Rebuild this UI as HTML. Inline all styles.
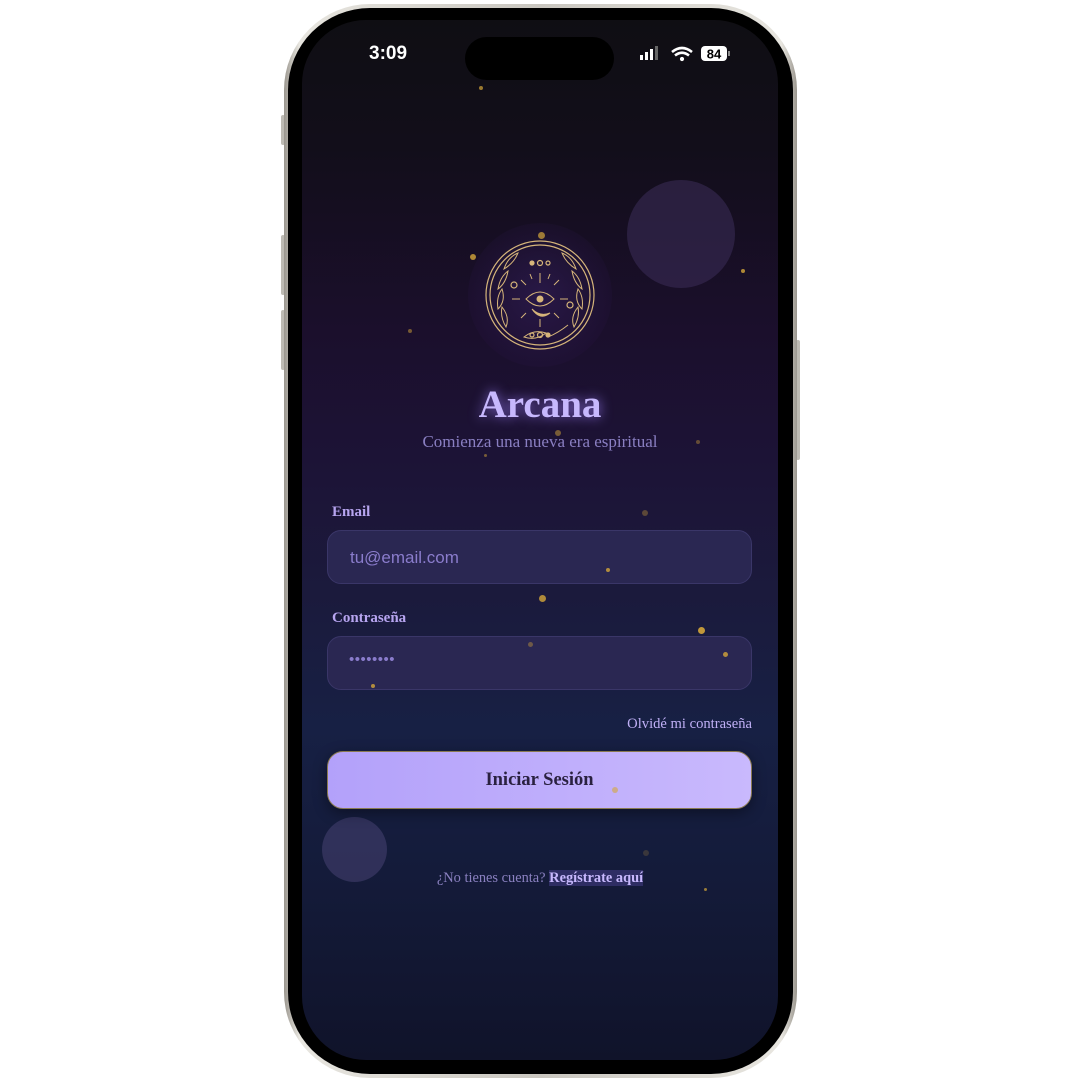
<!DOCTYPE html>
<html><head><meta charset="utf-8"><style>
*{margin:0;padding:0;box-sizing:border-box}
body{width:1080px;height:1080px;background:#fff;position:relative;overflow:hidden;font-family:"Liberation Serif",serif}
.frame{position:absolute;left:284px;top:4px;width:513px;height:1074px;border-radius:86px;background:linear-gradient(90deg,#9a968e,#e8e6e0 3%,#c9c6bf 50%,#e8e6e0 97%,#9a968e);}
.bezel{position:absolute;left:288px;top:8px;width:505px;height:1066px;border-radius:82px;background:#000}
.screen{position:absolute;left:302px;top:20px;width:476px;height:1040px;border-radius:64px;overflow:hidden;
background:linear-gradient(180deg,#0f0e13 0%,#120e1a 12%,#1b0f2c 30%,#1c1336 42%,#1b1a3c 55%,#172044 68%,#141b3a 82%,#10132a 100%)}
.btn-side{position:absolute;background:#bdbab3;border-radius:2px}
.abs{position:absolute}
.dot{position:absolute;border-radius:50%;background:#d4a63a}
.input{position:absolute;left:25px;width:425px;height:54px;border-radius:14px;background:#2a2752;border:1px solid #3a3668}
.label{position:absolute;left:30px;font-weight:bold;font-size:15px;color:#b7a5f0}
</style></head><body>
<div class="btn-side" style="left:281px;top:115px;width:4px;height:30px"></div>
<div class="btn-side" style="left:281px;top:235px;width:4px;height:60px"></div>
<div class="btn-side" style="left:281px;top:310px;width:4px;height:60px"></div>
<div class="btn-side" style="left:796px;top:340px;width:4px;height:120px"></div>
<div class="frame"></div>
<div class="bezel"></div>
<div class="screen">
  <div class="abs" style="left:67px;top:23px;font-family:'Liberation Sans',sans-serif;font-weight:bold;font-size:19px;color:#fff">3:09</div>
  <div class="abs" style="left:163px;top:17px;width:149px;height:43px;border-radius:22px;background:#000"></div>
  <svg class="abs" style="left:336px;top:24px" width="100" height="20" viewBox="0 0 100 20">
    <rect x="2" y="11" width="3" height="5" fill="#fff"/><rect x="7" y="8" width="3" height="8" fill="#fff"/><rect x="12" y="5" width="3" height="11" fill="#fff"/><rect x="17" y="2" width="3" height="14" fill="#666"/>
    <path d="M34 8 Q44 0 54 8" stroke="#fff" stroke-width="2.6" fill="none"/><path d="M37 11.5 Q44 6 51 11.5" stroke="#fff" stroke-width="2.6" fill="none"/><circle cx="44" cy="15" r="2.1" fill="#fff"/>
    <rect x="63" y="2" width="26" height="15" rx="4" fill="#fff"/><rect x="90" y="7" width="2" height="5" fill="#888"/>
    <text x="76" y="14.5" text-anchor="middle" font-family="Liberation Sans" font-weight="bold" font-size="13" fill="#000">84</text>
  </svg>
  <div class="abs" style="left:325px;top:160px;width:108px;height:108px;border-radius:50%;background:rgba(60,45,90,.55)"></div>
  <div class="abs" style="left:20px;top:797px;width:65px;height:65px;border-radius:50%;background:rgba(75,70,120,.5)"></div>
  <div class="abs" style="left:166px;top:203px;width:144px;height:144px;border-radius:50%;background:radial-gradient(circle,rgba(50,30,90,.6),rgba(40,20,70,.2) 70%,transparent)"></div>
  <svg class="abs" style="left:182px;top:219px" width="112" height="112" viewBox="0 0 112 112" fill="none" stroke="#d6b57a" stroke-width="1.2">
    <circle cx="56" cy="56" r="54"/><circle cx="56" cy="56" r="50"/>
    <g stroke-width="1">
    <path d="M20 30 q10 -6 14 -16 q-10 4 -14 16z"/><path d="M14 50 q2 -12 10 -18 q-2 12 -10 18z"/><path d="M14 70 q-2 -12 4 -20 q4 12 -4 20z"/><path d="M22 88 q-6 -10 -4 -20 q8 10 4 20z"/>
    <path d="M92 30 q-10 -6 -14 -16 q10 4 14 16z"/><path d="M98 50 q-2 -12 -10 -18 q2 12 10 18z"/><path d="M98 70 q2 -12 -4 -20 q-4 12 4 20z"/><path d="M90 88 q6 -10 4 -20 q-8 10 -4 20z"/>
    <path d="M40 98 q10 -8 22 -4 q-10 8 -22 4z"/><path d="M64 98 q10 -4 20 -12"/>
    <path d="M42 60 q14 -14 28 0 q-14 14 -28 0z"/><circle cx="56" cy="60" r="3" fill="#d6b57a"/>
    <path d="M48 70 q8 12 18 4 q-10 4 -18 -4z" fill="#d6b57a"/>
    <path d="M56 34v10M56 80v8M36 60h-8M76 60h8M42 46l-5 -5M70 46l5 -5M42 74l-5 5M70 74l5 5M48 40l-2 -5M64 40l2 -5"/>
    </g>
    <circle cx="48" cy="24" r="2" fill="#d6b57a"/><circle cx="56" cy="24" r="2.5"/><circle cx="64" cy="24" r="2"/>
    <circle cx="48" cy="96" r="2"/><circle cx="56" cy="96" r="2.5"/><circle cx="64" cy="96" r="2" fill="#d6b57a"/>
    <circle cx="30" cy="46" r="3"/><circle cx="86" cy="66" r="3"/>
  </svg>
  <div class="abs" style="left:0;width:476px;top:362px;text-align:center;font-weight:bold;font-size:39px;color:#c7b8fd;text-shadow:0 0 12px rgba(160,130,255,.8)">Arcana</div>
  <div class="abs" style="left:0;width:476px;top:412px;text-align:center;font-size:17px;color:#8a7fc2">Comienza una nueva era espiritual</div>
  <div class="label" style="top:484px">Email</div>
  <div class="input" style="top:510px"><span class="abs" style="left:22px;top:17px;font-family:'Liberation Sans',sans-serif;font-size:17px;color:#8a7ccc">tu@email.com</span></div>
  <div class="label" style="top:590px">Contraseña</div>
  <div class="input" style="top:616px"><span class="abs" style="left:21px;top:14px;font-family:'Liberation Sans',sans-serif;font-size:15px;letter-spacing:0.5px;color:#8a7ccc">••••••••</span></div>
  <div class="abs" style="right:26px;top:696px;font-size:14.6px;color:#c0b0f6">Olvidé mi contraseña</div>
  <div class="abs" style="left:25px;top:731px;width:425px;height:58px;border-radius:16px;background:linear-gradient(90deg,#b3a1fa,#c9b9fd);border:1px solid #8a7a50;box-shadow:0 4px 14px rgba(0,0,0,.4);text-align:center;line-height:57px;font-weight:bold;font-size:18.5px;color:#2a2140">Iniciar Sesión</div>
  <div class="abs" style="left:0;width:476px;top:850px;text-align:center;font-size:14.4px;color:#8a80c0">¿No tienes cuenta? <span style="color:#c7b8fd;font-weight:bold;background:rgba(110,90,200,.3)">Regístrate aquí</span></div>
  <div class="dot" style="left:177px;top:66px;width:4px;height:4px;opacity:.7"></div>
  <div class="dot" style="left:168px;top:234px;width:6px;height:6px;opacity:.8"></div>
  <div class="dot" style="left:236px;top:212px;width:7px;height:7px;opacity:.7"></div>
  <div class="dot" style="left:439px;top:249px;width:4px;height:4px;opacity:.8"></div>
  <div class="dot" style="left:106px;top:309px;width:4px;height:4px;opacity:.5"></div>
  <div class="dot" style="left:253px;top:410px;width:6px;height:6px;opacity:.5"></div>
  <div class="dot" style="left:394px;top:420px;width:4px;height:4px;opacity:.4"></div>
  <div class="dot" style="left:182px;top:434px;width:3px;height:3px;opacity:.5"></div>
  <div class="dot" style="left:340px;top:490px;width:6px;height:6px;opacity:.35"></div>
  <div class="dot" style="left:304px;top:548px;width:4px;height:4px;opacity:.8"></div>
  <div class="dot" style="left:237px;top:575px;width:7px;height:7px;opacity:.8"></div>
  <div class="dot" style="left:396px;top:607px;width:7px;height:7px;opacity:.9"></div>
  <div class="dot" style="left:226px;top:622px;width:5px;height:5px;opacity:.4"></div>
  <div class="dot" style="left:421px;top:632px;width:5px;height:5px;opacity:.8"></div>
  <div class="dot" style="left:69px;top:664px;width:4px;height:4px;opacity:.8"></div>
  <div class="dot" style="left:310px;top:767px;width:6px;height:6px;opacity:.6"></div>
  <div class="dot" style="left:341px;top:830px;width:6px;height:6px;opacity:.2"></div>
  <div class="dot" style="left:402px;top:868px;width:3px;height:3px;opacity:.7"></div>
</div>
</body></html>
